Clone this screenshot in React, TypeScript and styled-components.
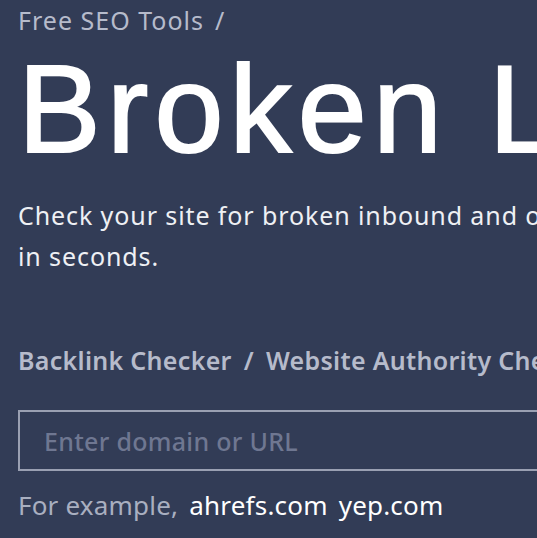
import React from "react";
import styled, { createGlobalStyle } from "styled-components";

const Global = createGlobalStyle`
  html, body { margin: 0; padding: 0; background: #323c56; overflow: hidden; }
  body { width: 537px; height: 538px; }
`;

const Page = styled.main`
  width: 900px;
  padding: 4px 0 0 18px;
  display: flex;
  flex-direction: column;
  font-family: "Noto Sans", "Liberation Sans", sans-serif;
`;

const Crumbs = styled.nav`
  display: flex;
  gap: 11px;
  font-size: 25px;
  line-height: 33px;
  letter-spacing: 1px;
  color: #b6bbcb;
  white-space: nowrap;
`;

const Title = styled.h1`
  margin: 10px 0 0 0;
  font-family: "Liberation Sans", Arial, sans-serif;
  font-weight: 400;
  font-size: 124px;
  line-height: 124px;
  letter-spacing: 6.2px;
  color: #ffffff;
  -webkit-text-stroke: 2px #ffffff;
  white-space: nowrap;
`;

const Lead = styled.p`
  margin: 24px 0 0;
  width: 712px;
  font-size: 25px;
  line-height: 41px;
  letter-spacing: 0.9px;
  color: #eef0f4;
`;

const Related = styled.nav`
  margin-top: 66px;
  display: flex;
  gap: 12px;
  font-size: 25px;
  font-weight: 600;
  line-height: 34px;
  letter-spacing: 0.3px;
  color: #b6bbcb;
  white-space: nowrap;
`;

const Field = styled.input`
  margin-top: 33px;
  width: 780px;
  height: 61px;
  box-sizing: border-box;
  border: 2px solid #9aa0b2;
  background: transparent;
  padding: 0 24px;
  font-family: "Noto Sans", sans-serif;
  font-size: 25px;
  font-weight: 500;
  letter-spacing: 0.3px;
  color: #fff;
  outline: none;
  &::placeholder { color: #6f7791; }
`;

const Examples = styled.div`
  margin-top: 16px;
  display: flex;
  gap: 11px;
  font-size: 26px;
  line-height: 36px;
  letter-spacing: 0.2px;
  white-space: nowrap;
`;

const Muted = styled.span`
  color: #a9afc0;
`;

const Sample = styled.a`
  color: #ffffff;
  text-decoration: none;
`;

export default function App() {
  return (
    <>
      <Global />
      <Page>
        <Crumbs>
          <span>Free SEO Tools</span>
          <span>/</span>
        </Crumbs>
        <Title>Broken Link Checker</Title>
        <Lead>
          Check your site for broken inbound and outbound links in seconds.
        </Lead>
        <Related>
          <span>Backlink Checker</span>
          <span>/</span>
          <span>Website Authority Checker</span>
          <span>/</span>
          <span>Keyword Generator</span>
        </Related>
        <Field placeholder="Enter domain or URL" />
        <Examples>
          <Muted>For example,</Muted>
          <Sample href="#">ahrefs.com</Sample>
          <Sample href="#">yep.com</Sample>
        </Examples>
      </Page>
    </>
  );
}
